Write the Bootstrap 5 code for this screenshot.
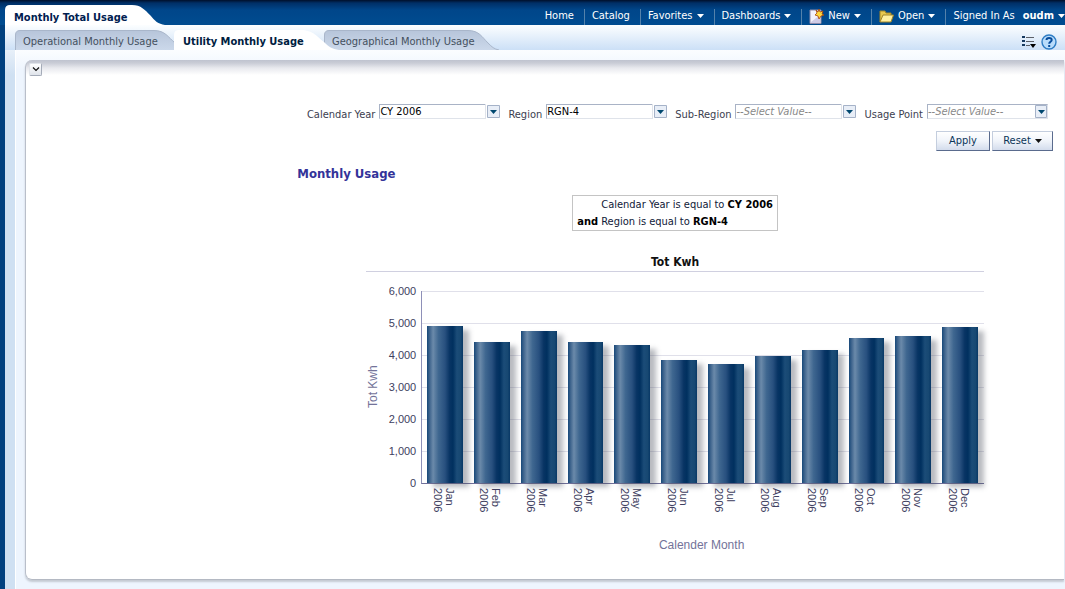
<!DOCTYPE html>
<html lang="en">
<head>
<meta charset="utf-8">
<meta name="viewport" content="width=device-width, initial-scale=1">
<title>Monthly Total Usage</title>
<link href="https://cdn.jsdelivr.net/npm/bootstrap@5.3.0/dist/css/bootstrap.min.css" rel="stylesheet">
<style>
body{font-family:"DejaVu Sans Condensed","DejaVu Sans",sans-serif;font-size:11px;line-height:14px;background:#00407f;color:#000}
a{text-decoration:none;color:inherit}
svg{display:block;flex:none}
.topbar{height:25px;background:linear-gradient(#000f2a 0,#002f66 3px,#00468a 10px,#004c90 100%);padding-left:5px}
.topbar-right{padding-top:9px;color:#fff}
.topbar-right .item{height:16px;border-left:1px solid #5482ab;padding:0 10px 0 7px;white-space:nowrap}
.topbar-right .item:first-child{border-left:0}
.topbar-right .btn-plain{background:none;border:0;padding:0;color:#fff;height:14px}
.title-tab{width:160px;height:20px;margin-top:5px;position:relative}
.tab-shape{position:absolute;left:0;top:0;z-index:0}
.tab-label{position:relative;z-index:1;white-space:nowrap}
.title-tab h1{font-size:11px;font-weight:bold;line-height:16px;margin:0;padding:5px 0 0 9px;color:#002050}
.shell{margin-left:5px;background:linear-gradient(#fff 0,#cfe0f2 50px);padding-left:10px}
.tabrow{height:25px;background:linear-gradient(#fcfeff,#cce0f7);margin-left:-10px;padding:5px 8px 0 10px}
.subtab{height:20px;position:relative}
.subtab .tab-label{display:block;line-height:20px;padding:2px 0 0 8px;color:#44505e}
.subtab.on{z-index:2}
.subtab.on .tab-label{font-weight:bold;color:#002040;padding-left:9px}
.t1{width:159px}.t2{width:150px}.t3{width:181px}
.inner{border-left:1px solid #fff;background:linear-gradient(#fbfdff 0,#eef5fe 20px);padding:10px 1px 9px 9px;min-height:539px}
.panel{background:linear-gradient(#bfc3cf 0,#c9ccd6 3px,#e8e9ee 8px,#fff 15px);border-left:1px solid #b9bfca;border-bottom:1px solid #b4b9c3;border-radius:7px 0 0 7px;box-shadow:0 2px 2px #c4cad3;min-height:520px;padding:3px 11px 26px 3px}
.toggle{width:13px;height:13px;border:1px solid #a4abb8;border-left-color:#e0e4ea;border-top-color:#e0e4ea;border-radius:2px;background:linear-gradient(#fff,#dfe3ea);padding:0}
.report{margin-left:26%;padding-left:2px}
.filters{margin-top:28px;margin-left:-20px;padding-right:5px;color:#3c4050}
.filters .field{gap:4px}
.pick{position:relative}
.pick select{appearance:none;width:121px;height:15px;border:1px solid #a9b3c6;border-right-color:#dfe3ea;border-bottom-color:#dfe3ea;background:#fff;font:inherit;line-height:13px;padding:0;color:#000;border-radius:0}
.pick select.empty{color:#888;font-style:italic}
.pick svg{position:absolute;right:0;top:0;pointer-events:none}
.actions{margin-top:9px}
.act{font-size:11px;height:20px;border:1px solid #c4cede;border-right-color:#5a6b8d;border-bottom-color:#5a6b8d;background:linear-gradient(#fff,#f0f4fa 50%,#d3dcec);color:#0a3558;padding:0}
.act-a{width:54px;margin-right:2px}.act-r{width:61px}
.report h2{font-size:13px;font-weight:bold;line-height:16px;color:#339;margin:15px 0 13px}
.cond{border:1px solid #c4c4c4;padding:0 4px;line-height:17px;color:#102038}
.cond .first{padding-left:24px}
.cond b{color:#000}
.chart{margin:23px 69px 0;font-family:"Liberation Sans",sans-serif;color:#404060}
.chart h3{font:bold 12px/16px "DejaVu Sans Condensed","DejaVu Sans",sans-serif;color:#111;text-align:center;margin:0;padding-bottom:1px;border-bottom:1px solid #d0d0e0}
.plotrow{padding-top:19px}
.ytitle{writing-mode:vertical-rl;transform:rotate(180deg);font-size:12px;line-height:14px;color:#737399;text-align:center;height:192px}
.yscale{width:36px;height:192px;text-align:right}
.yscale ul{list-style:none;margin:-16px 0 0;padding:0;line-height:32px}
.plot{height:193px;margin-left:5px;border-left:1px solid #8e90b8;border-bottom:1px solid #70709a;background:repeating-linear-gradient(#e0e0ea 0,#e0e0ea 1px,#fff 1px,#fff 32px)}
.slot{flex:1 1 0;padding:0 6px 0 5px}
.bar{background:linear-gradient(90deg,#174879 0,#42678f 8%,#6b8aaa 17%,#3f6790 32%,#28507f 50%,#083464 63%,#00305f 72%,#1b4c78 83%,#174872 93%,#083866);box-shadow:6px 4px 5px rgba(70,75,90,.38)}
.months{padding:4px 0 0 56px;line-height:12px}
.months div{flex:1 1 0}
.months span{writing-mode:vertical-rl;margin-right:4px;height:26px}
.xtitle{font-size:12px;line-height:14px;color:#737399;text-align:center;padding:24px 0 0 53px}
</style>
<script src="https://cdn.jsdelivr.net/npm/bootstrap@5.3.0/dist/js/bootstrap.bundle.min.js"></script>
</head>
<body>
<header class="topbar d-flex justify-content-between">
  <div class="title-tab">
    <svg class="tab-shape" width="160" height="20"><path d="M0 20V5Q0 0 5 0H127C136 0 140 5 145 10C150 16 153 19 160 20Z" fill="#fff"/></svg>
    <h1 class="tab-label">Monthly Total Usage</h1>
  </div>
  <nav class="topbar-right d-flex" aria-label="Global">
    <a class="item" href="#">Home</a>
    <a class="item" href="#">Catalog</a>
    <div class="item"><button class="btn-plain d-flex align-items-center gap-1" type="button">Favorites <svg width="7" height="4"><path d="M0 0H7L3.500 4Z" fill="#fff"/></svg></button></div>
    <div class="item"><button class="btn-plain d-flex align-items-center gap-1" type="button">Dashboards <svg width="7" height="4"><path d="M0 0H7L3.500 4Z" fill="#fff"/></svg></button></div>
    <div class="item"><button class="btn-plain d-flex align-items-center gap-1" type="button"><svg width="15" height="15" viewBox="0 0 15 15"><path d="M1 1H12V14.500H1Z" fill="#f3f1fb" stroke="#8d8aa8"/><path d="M2 13L11 6V14H2Z" fill="#cfcbe6"/><path d="M10 0L11 3L14 2L13 5L15 6L12 7L10 10L9 7L6 6L8 4L7 1L9 3Z" fill="#ffd83a" stroke="#a4420e" stroke-width=".8"/></svg>New <svg width="7" height="4"><path d="M0 0H7L3.500 4Z" fill="#fff"/></svg></button></div>
    <div class="item"><button class="btn-plain d-flex align-items-center gap-1" type="button"><svg width="15" height="13" viewBox="0 0 15 13"><path d="M1 12V1H6L7 3H12V5" fill="#e8c84f" stroke="#a08427"/><path d="M1 12L4 5H14.500L12 12Z" fill="#fff0a0" stroke="#a08427"/></svg>Open <svg width="7" height="4"><path d="M0 0H7L3.500 4Z" fill="#fff"/></svg></button></div>
    <div class="item d-flex gap-1 pe-0">Signed In As <button class="btn-plain d-flex align-items-center gap-1 fw-bold ms-1" type="button">oudm <svg width="7" height="4"><path d="M0 0H7L3.500 4Z" fill="#fff"/></svg></button></div>
  </nav>
</header>
<div class="shell">
  <div class="tabrow d-flex justify-content-between">
    <nav class="d-flex" aria-label="Dashboard pages">
      <a class="subtab t1" href="#"><svg class="tab-shape" width="168" height="20"><defs><linearGradient id="g" x2="0" y2="1"><stop stop-color="#b7c5da"/><stop offset="1" stop-color="#cbd8ea"/></linearGradient></defs><path d="M.5 20V5Q.5.500 5 .5H139C150 .5 153 7 160 13C163 17 165 19 168 20" fill="url(#g)" stroke="#a9b6ca"/></svg><span class="tab-label">Operational Monthly Usage</span></a>
      <a class="subtab on t2" href="#"><svg class="tab-shape" width="165" height="20"><path d="M0 20V5Q0 0 5 0H126C140 0 143 7 150 12C155 17 158 19 165 20Z" fill="#fff"/></svg><span class="tab-label">Utility Monthly Usage</span></a>
      <a class="subtab t3" href="#"><svg class="tab-shape" width="175" height="20"><path d="M.5 20V5Q.5.500 5 .5H144C155 .5 158 7 164 13C168 17 170 19 175 20" fill="url(#g)" stroke="#a9b6ca"/></svg><span class="tab-label">Geographical Monthly Usage</span></a>
    </nav>
    <div class="d-flex gap-1 pt-1">
      <button class="btn-plain border-0 bg-transparent p-0" type="button" aria-label="Page options"><svg width="15" height="14" viewBox="0 0 15 14"><path d="M0 2H3M0 6H3M0 10H3" stroke="#16395f" stroke-width="2"/><path d="M4 2.500H12M4 6.500H12M4 10.500H8" stroke="#5c6068"/><path d="M8 9H14L11 13Z" fill="#000"/></svg></button>
      <a href="#" aria-label="Help"><svg width="16" height="16" viewBox="0 0 16 16"><circle cx="8" cy="8" r="7" fill="#b9dcfb" stroke="#2d7cc4" stroke-width="1.400"/><path d="M5.500 6C5.500 3.300 10.700 3.200 10.700 6C10.700 7.800 8.200 7.800 8.200 9.800M8.200 11V13" fill="none" stroke="#074c9c" stroke-width="2"/></svg></a>
    </div>
  </div>
  <div class="inner">
    <main class="panel">
      <button class="toggle d-flex align-items-center justify-content-center" type="button" aria-label="Collapse"><svg width="8" height="5"><path d="M1 .5L4 3.500L7 .5" fill="none" stroke="#111" stroke-width="1.200"/></svg></button>
      <div class="report">
        <form class="filters d-flex flex-wrap justify-content-end">
          <div class="field d-flex me-2"><label for="yr" class="pt-1">Calendar Year</label><div class="pick"><select id="yr"><option>CY 2006</option></select><svg width="15" height="15"><path d="M1 0H15V15H1Z" fill="#fff"/><path d="M.5 0V15" stroke="#dfe3ea"/><path d="M2.500 1.500H14.500V13.500H2.500Z" fill="#e8eef7" stroke="#a5b2c8"/><path d="M5 6H12L8.500 10Z" fill="#00486f"/></svg></div></div>
          <div class="field d-flex me-2"><label for="rg" class="pt-1">Region</label><div class="pick"><select id="rg"><option>RGN-4</option></select><svg width="15" height="15"><path d="M1 0H15V15H1Z" fill="#fff"/><path d="M.5 0V15" stroke="#dfe3ea"/><path d="M2.500 1.500H14.500V13.500H2.500Z" fill="#e8eef7" stroke="#a5b2c8"/><path d="M5 6H12L8.500 10Z" fill="#00486f"/></svg></div></div>
          <div class="field d-flex me-2"><label for="sr" class="pt-1">Sub-Region</label><div class="pick"><select id="sr" class="empty"><option>--Select Value--</option></select><svg width="15" height="15"><path d="M1 0H15V15H1Z" fill="#fff"/><path d="M.5 0V15" stroke="#dfe3ea"/><path d="M2.500 1.500H14.500V13.500H2.500Z" fill="#e8eef7" stroke="#a5b2c8"/><path d="M5 6H12L8.500 10Z" fill="#00486f"/></svg></div></div>
          <div class="field d-flex"><label for="up" class="pt-1">Usage Point</label><div class="pick"><select id="up" class="empty"><option>--Select Value--</option></select><svg width="14" height="15"><path d="M1.500 1.500H12.500V13.500H1.500Z" fill="#e8eef7" stroke="#a5b2c8"/><path d="M4 6H11L7.500 10Z" fill="#00486f"/></svg></div></div>
        </form>
        <div class="actions d-flex justify-content-end">
          <button class="act act-a" type="button">Apply</button>
          <button class="act act-r d-flex align-items-center justify-content-center gap-1" type="button">Reset <svg width="7" height="4"><path d="M0 0H7L3.500 4Z" fill="#111"/></svg></button>
        </div>
        <h2>Monthly Usage</h2>
        <div class="d-flex justify-content-center"><div class="cond">
          <div class="first">Calendar Year is equal to <b>CY 2006</b></div>
          <div><b>and</b> Region is equal to <b>RGN-4</b></div>
        </div></div>
        <section class="chart">
          <h3>Tot Kwh</h3>
          <div class="plotrow d-flex">
            <div class="ytitle">Tot Kwh</div>
            <div class="yscale"><ul><li>6,000</li><li>5,000</li><li>4,000</li><li>3,000</li><li>2,000</li><li>1,000</li><li>0</li></ul></div>
            <div class="plot d-flex align-items-end flex-fill">
              <div class="slot h-100 d-flex align-items-end"><div class="bar w-100" style="height:82%"></div></div>
              <div class="slot h-100 d-flex align-items-end"><div class="bar w-100" style="height:73.500%"></div></div>
              <div class="slot h-100 d-flex align-items-end"><div class="bar w-100" style="height:79.300%"></div></div>
              <div class="slot h-100 d-flex align-items-end"><div class="bar w-100" style="height:73.500%"></div></div>
              <div class="slot h-100 d-flex align-items-end"><div class="bar w-100" style="height:72%"></div></div>
              <div class="slot h-100 d-flex align-items-end"><div class="bar w-100" style="height:64.200%"></div></div>
              <div class="slot h-100 d-flex align-items-end"><div class="bar w-100" style="height:62%"></div></div>
              <div class="slot h-100 d-flex align-items-end"><div class="bar w-100" style="height:66.300%"></div></div>
              <div class="slot h-100 d-flex align-items-end"><div class="bar w-100" style="height:69.400%"></div></div>
              <div class="slot h-100 d-flex align-items-end"><div class="bar w-100" style="height:75.600%"></div></div>
              <div class="slot h-100 d-flex align-items-end"><div class="bar w-100" style="height:76.600%"></div></div>
              <div class="slot h-100 d-flex align-items-end"><div class="bar w-100" style="height:81.400%"></div></div>
            </div>
          </div>
          <div class="months d-flex">
            <div class="d-flex justify-content-center"><span>Jan<br>2006</span></div><div class="d-flex justify-content-center"><span>Feb<br>2006</span></div><div class="d-flex justify-content-center"><span>Mar<br>2006</span></div><div class="d-flex justify-content-center"><span>Apr<br>2006</span></div><div class="d-flex justify-content-center"><span>May<br>2006</span></div><div class="d-flex justify-content-center"><span>Jun<br>2006</span></div><div class="d-flex justify-content-center"><span>Jul<br>2006</span></div><div class="d-flex justify-content-center"><span>Aug<br>2006</span></div><div class="d-flex justify-content-center"><span>Sep<br>2006</span></div><div class="d-flex justify-content-center"><span>Oct<br>2006</span></div><div class="d-flex justify-content-center"><span>Nov<br>2006</span></div><div class="d-flex justify-content-center"><span>Dec<br>2006</span></div>
          </div>
          <div class="xtitle">Calender Month</div>
        </section>
      </div>
    </main>
  </div>
</div>
</body>
</html>
